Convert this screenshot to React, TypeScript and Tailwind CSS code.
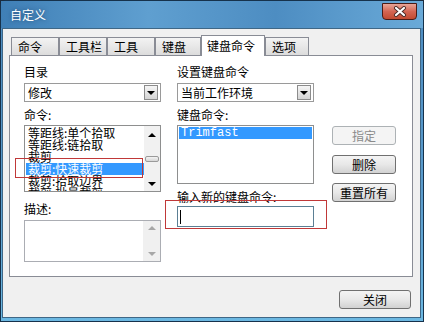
import React from "react";

const CMDS = [
  "等距线:单个拾取",
  "等距线:链拾取",
  "裁剪",
  "裁剪:快速裁剪",
  "裁剪:拾取边界",
  "裁剪:批量裁剪",
];

const TABS = [
  { id: "cmd", label: "命令", w: "w-[48px]" },
  { id: "toolbar", label: "工具栏", w: "w-[48px]" },
  { id: "tool", label: "工具", w: "w-[48px]" },
  { id: "kbd", label: "键盘", w: "w-[46px]" },
  { id: "kbdcmd", label: "键盘命令", w: "w-[64px]", active: true },
  { id: "opt", label: "选项", w: "w-[44px]" },
];

function DownTri({ color = "border-t-black" }: { color?: string }) {
  return (
    <div
      className={`h-0 w-0 border-l-[4px] border-r-[4px] border-t-[4px] border-l-transparent border-r-transparent ${color}`}
    />
  );
}

function UpTri({ color = "border-b-black" }: { color?: string }) {
  return (
    <div
      className={`h-0 w-0 border-l-[4px] border-r-[4px] border-b-[4px] border-l-transparent border-r-transparent ${color}`}
    />
  );
}

function Combo({ value }: { value: string }) {
  return (
    <div className="flex h-[19px] w-[137px] items-center border border-[#9a9a9a] bg-white">
      <span className="flex-1 pl-[3px] text-[12px] leading-[12px] text-black">{value}</span>
      <div className="mr-[2px] flex h-[15px] w-[14px] items-center justify-center border border-[#8c8c8c] bg-gradient-to-b from-[#f6f6f6] to-[#d4d4d4]">
        <DownTri />
      </div>
    </div>
  );
}

function Btn({ label, disabled, w = "w-[64px]" }: { label: string; disabled?: boolean; w?: string }) {
  return (
    <div
      className={`flex h-[19px] ${w} items-center justify-center rounded-[3px] border text-[12px] leading-[12px] ${
        disabled
          ? "border-[#adb2b5] bg-[#f4f4f4] text-[#8a8a8a]"
          : "border-[#707070] bg-gradient-to-b from-[#f4f4f4] via-[#e8e8e8] to-[#d2d2d2] text-black"
      }`}
    >
      {label}
    </div>
  );
}

export default function App() {
  return (
    <div className="h-[322px] w-[424px] overflow-hidden bg-[#1b2b3d] font-['Noto_Sans_CJK_SC','Noto_Sans',sans-serif]">
      <div className="flex h-full flex-col rounded-t-[6px] border border-[#16324c] bg-[linear-gradient(to_bottom,#5592c4,#4f8fc3_10%,#5a9ccd_60%,#6cb8e2)]">
        {/* title bar */}
        <div className="relative flex h-[27px] shrink-0 items-center bg-[linear-gradient(to_right,#3f7fb6,#5f9fd0_35%,#4d8dc2_65%,#6aaad8)] pl-[9px]">
          <span className="text-[12px] leading-[12px] text-white [text-shadow:0_0_4px_rgba(20,50,90,0.7)]">
            自定义
          </span>
          <div className="absolute right-[6px] top-[2px] flex h-[17px] w-[35px] items-center justify-center rounded-b-[4px] border border-[#4a1c16] bg-gradient-to-b from-[#e8a598] via-[#d46552] to-[#c24a30]">
            <svg width="14" height="11" viewBox="0 0 14 11">
              <path d="M3 2 L11 9 M11 2 L3 9" stroke="#4a2a26" strokeWidth="4" strokeLinecap="round" />
              <path d="M3 2 L11 9 M11 2 L3 9" stroke="#ffffff" strokeWidth="2.2" strokeLinecap="round" />
            </svg>
          </div>
        </div>

        {/* client */}
        <div className="mb-[3px] ml-[1px] mr-[2px] flex flex-1 flex-col border border-[#3f6786] bg-[#f0f0f0] pl-[6px]">
          {/* tabs */}
          <div className="flex h-[26px] items-end pl-[2px]">
            {TABS.map((t) =>
              t.active ? (
                <div
                  key={t.id}
                  className={`relative z-10 -mb-[1px] flex h-[21px] ${t.w} items-center border border-b-0 border-[#898c95] bg-white pl-[5px] text-[12px] leading-[12px] text-black`}
                >
                  {t.label}
                </div>
              ) : (
                <div
                  key={t.id}
                  className={`flex h-[18px] ${t.w} items-center border border-b-0 border-[#898c95] bg-gradient-to-b from-[#f3f3f3] to-[#dcdcdc] pl-[6px] text-[12px] leading-[12px] text-black`}
                >
                  {t.label}
                </div>
              )
            )}
          </div>

          {/* panel */}
          <div className="relative flex h-[222px] w-[404px] border border-[#898c95] bg-white">
            {/* left column */}
            <div className="ml-[14px] flex w-[137px] flex-col pt-[10px]">
              <span className="h-[12px] text-[12px] leading-[12px] text-black">目录</span>
              <div className="mt-[5px]">
                <Combo value="修改" />
              </div>
              <span className="mt-[7px] h-[12px] text-[12px] leading-[12px] text-black">命令:</span>
              <div className="mt-[4px] flex h-[67px] w-[137px] overflow-hidden border border-[#8e8f8f] bg-white">
                <div className="flex-1 overflow-hidden pl-[1px] pt-[1px]">
                  {CMDS.map((c) => (
                    <div
                      key={c}
                      className={`h-[12px] whitespace-nowrap pl-[2px] text-[12px] leading-[12px] ${
                        c === "裁剪:快速裁剪" ? "bg-[#3399ff] text-white" : "text-black"
                      }`}
                    >
                      {c}
                    </div>
                  ))}
                </div>
                <div className="flex w-[16px] flex-col bg-[#f1f1f1]">
                  <div className="flex h-[17px] items-center justify-center">
                    <UpTri />
                  </div>
                  <div className="flex-1">
                    <div className="mx-[1px] mt-[13px] h-[6px] rounded-[2px] border border-[#9a9a9a] bg-gradient-to-b from-[#f4f4f4] to-[#d6d6d6]" />
                  </div>
                  <div className="flex h-[14px] items-center justify-center">
                    <DownTri />
                  </div>
                </div>
              </div>
              <span className="mt-[11px] h-[12px] text-[12px] leading-[12px] text-black">描述:</span>
              <div className="mt-[5px] flex h-[42px] w-[137px] border border-[#abadb3] bg-white">
                <div className="flex-1" />
                <div className="flex w-[17px] flex-col justify-between bg-[#f0f0f0] py-[5px]">
                  <div className="flex justify-center">
                    <UpTri color="border-b-[#a7a7a7]" />
                  </div>
                  <div className="flex justify-center">
                    <DownTri color="border-t-[#a7a7a7]" />
                  </div>
                </div>
              </div>
            </div>

            {/* right column */}
            <div className="ml-[16px] flex w-[137px] flex-col pt-[10px]">
              <span className="h-[12px] text-[12px] leading-[12px] text-black">设置键盘命令</span>
              <div className="mt-[5px]">
                <Combo value="当前工作环境" />
              </div>
              <span className="mt-[7px] h-[12px] text-[12px] leading-[12px] text-black">键盘命令:</span>
              <div className="mt-[4px] h-[59px] w-[137px] border border-[#8e8f8f] bg-white p-[1px]">
                <div className="h-[12px] bg-[#3399ff] pl-[2px] font-['Liberation_Mono','DejaVu_Sans_Mono',monospace] text-[12px] leading-[12px] text-white">
                  Trimfast
                </div>
              </div>
              <span className="mt-[7px] h-[12px] text-[12px] leading-[12px] text-black">输入新的键盘命令:</span>
              <div className="mt-[3px] flex h-[21px] w-[137px] items-center border border-[#5b7f94] bg-white pl-[2px]">
                <div className="h-[14px] w-[1px] bg-black" />
              </div>
            </div>

            {/* buttons */}
            <div className="ml-[18px] flex flex-col pt-[70px]">
              <Btn label="指定" disabled />
              <div className="mt-[10px]">
                <Btn label="删除" />
              </div>
              <div className="mt-[9px]">
                <Btn label="重置所有" />
              </div>
            </div>

            {/* annotation boxes */}
            <div className="absolute left-[5px] top-[102px] h-[20px] w-[128px] border border-[#c03838]" />
            <div className="absolute left-[155px] top-[144px] h-[29px] w-[162px] border border-[#c03838]" />
          </div>

          {/* footer */}
          <div className="mr-[9px] mt-[13px] flex justify-end">
            <Btn label="关闭" w="w-[72px]" />
          </div>
        </div>
      </div>
    </div>
  );
}
